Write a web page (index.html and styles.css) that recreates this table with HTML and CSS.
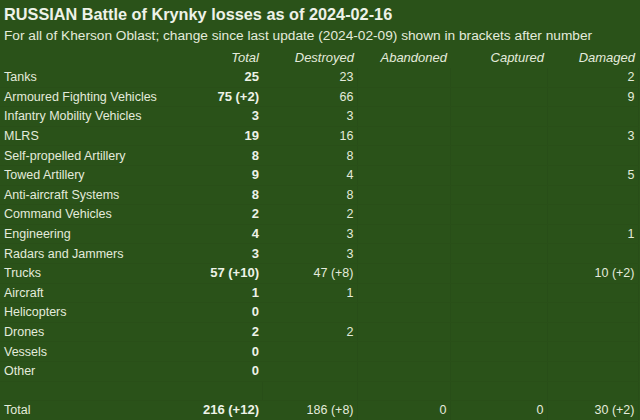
FILE: index.html
```html
<!DOCTYPE html>
<html>
<head>
<meta charset="utf-8">
<link rel="stylesheet" href="styles.css">
</head>
<body>
<div class="sheet">
  <h1 class="title">RUSSIAN Battle of Krynky losses as of 2024-02-16</h1>
  <p class="subtitle">For all of Kherson Oblast; change since last update (2024-02-09) shown in brackets after number</p>
  <table class="losses">
    <colgroup>
      <col class="c-label"><col class="c-total"><col class="c-num"><col class="c-num2"><col class="c-num3"><col class="c-num4">
    </colgroup>
    <thead>
      <tr><th></th><th>Total</th><th>Destroyed</th><th>Abandoned</th><th>Captured</th><th>Damaged</th></tr>
    </thead>
    <tbody>
      <tr><td class="lbl">Tanks</td><td class="tot">25</td><td>23</td><td></td><td></td><td>2</td></tr>
      <tr><td class="lbl">Armoured Fighting Vehicles</td><td class="tot">75 (+2)</td><td>66</td><td></td><td></td><td>9</td></tr>
      <tr><td class="lbl">Infantry Mobility Vehicles</td><td class="tot">3</td><td>3</td><td></td><td></td><td></td></tr>
      <tr><td class="lbl">MLRS</td><td class="tot">19</td><td>16</td><td></td><td></td><td>3</td></tr>
      <tr><td class="lbl">Self-propelled Artillery</td><td class="tot">8</td><td>8</td><td></td><td></td><td></td></tr>
      <tr><td class="lbl">Towed Artillery</td><td class="tot">9</td><td>4</td><td></td><td></td><td>5</td></tr>
      <tr><td class="lbl">Anti-aircraft Systems</td><td class="tot">8</td><td>8</td><td></td><td></td><td></td></tr>
      <tr><td class="lbl">Command Vehicles</td><td class="tot">2</td><td>2</td><td></td><td></td><td></td></tr>
      <tr><td class="lbl">Engineering</td><td class="tot">4</td><td>3</td><td></td><td></td><td>1</td></tr>
      <tr><td class="lbl">Radars and Jammers</td><td class="tot">3</td><td>3</td><td></td><td></td><td></td></tr>
      <tr><td class="lbl">Trucks</td><td class="tot">57 (+10)</td><td>47 (+8)</td><td></td><td></td><td>10 (+2)</td></tr>
      <tr><td class="lbl">Aircraft</td><td class="tot">1</td><td>1</td><td></td><td></td><td></td></tr>
      <tr><td class="lbl">Helicopters</td><td class="tot">0</td><td></td><td></td><td></td><td></td></tr>
      <tr><td class="lbl">Drones</td><td class="tot">2</td><td>2</td><td></td><td></td><td></td></tr>
      <tr><td class="lbl">Vessels</td><td class="tot">0</td><td></td><td></td><td></td><td></td></tr>
      <tr><td class="lbl">Other</td><td class="tot">0</td><td></td><td></td><td></td><td></td></tr>
      <tr><td class="lbl"></td><td></td><td></td><td></td><td></td><td></td></tr>
      <tr><td class="lbl">Total</td><td class="tot">216 (+12)</td><td>186 (+8)</td><td>0</td><td>0</td><td>30 (+2)</td></tr>
    </tbody>
  </table>
</div>
</body>
</html>
```
FILE: styles.css
```css
html, body {
  margin: 0;
  padding: 0;
  background: #2a5219;
}
body {
  width: 640px;
  height: 420px;
  overflow: hidden;
  font-family: "Liberation Sans", Arial, sans-serif;
  color: #e4ebdc;
}
.sheet {
  padding-top: 3px;
}
.title {
  margin: 0;
  padding-left: 4px;
  font-size: 16.3px;
  line-height: 22px;
  font-weight: bold;
  color: #eef2e8;
}
.subtitle {
  margin: 0;
  padding-left: 4px;
  font-size: 13.7px;
  line-height: 22px;
}
.losses {
  border-collapse: collapse;
  table-layout: fixed;
  width: 638px;
  font-size: 12.5px;
}
.c-label { width: 175px; }
.c-total { width: 87px; }
.c-num { width: 95px; }
.c-num2 { width: 93px; }
.c-num3 { width: 97px; }
.c-num4 { width: 91px; }
.losses th {
  height: 20px;
  padding: 1px 3px 0 0;
  font-weight: normal;
  font-style: italic;
  font-size: 13px;
  text-align: right;
  line-height: 20px;
}
.losses td {
  height: 18.6px;
  padding: 0 3px 0 0;
  text-align: right;
  line-height: 18px;
  white-space: nowrap;
  border-right: 1px solid #284e18;
  border-bottom: 1px solid #294f18;
}
.losses td.lbl {
  text-align: left;
  padding-left: 4px;
  border-right: none;
}
.losses td.tot {
  font-weight: bold;
  font-size: 13px;
  color: #eef2e8;
  border-right: none;
}
```
